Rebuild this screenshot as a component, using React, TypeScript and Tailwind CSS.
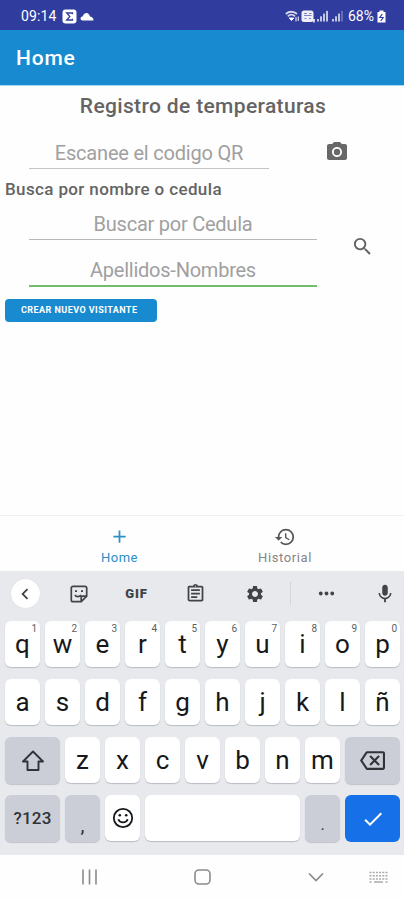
import type { ReactNode } from "react";
import {
  MdAdd,
  MdCheck,
  MdChevronLeft,
  MdHistory,
  MdMic,
  MdMoreHoriz,
  MdOutlineAssignment,
  MdOutlineBackspace,
  MdPhotoCamera,
  MdSearch,
  MdSettings,
} from "react-icons/md";

const topRow = ["q", "w", "e", "r", "t", "y", "u", "i", "o", "p"];
const homeRow = ["a", "s", "d", "f", "g", "h", "j", "k", "l", "ñ"];
const bottomRow = ["z", "x", "c", "v", "b", "n", "m"];

function SignalIcon({ level }: { level: number }) {
  return (
    <svg width="12" height="12" viewBox="0 0 12 12" fill="#fff">
      {[0, 1, 2, 3].map((i) => (
        <rect key={i} x={i * 3} y={9 - i * 2.7} width="2" height={2.5 + i * 2.7} opacity={i < level ? 0.7 : 0.25} />
      ))}
    </svg>
  );
}

function StatusBar() {
  return (
    <div className="flex h-[30px] items-center bg-[#303c9e] pl-[21px] pr-[18px] pt-[2px] text-white">
      <span className="w-[37px] whitespace-nowrap text-[14px] leading-none tracking-[0.1px]">09:14</span>
      <svg className="ml-[4px]" width="15" height="15" viewBox="0 0 15 15">
        <rect x="0.5" y="0.5" width="14" height="14" rx="3" fill="#fff" />
        <path d="M10.5 5.2V4H4.7l3.1 3.5L4.7 11h5.8V9.8" fill="none" stroke="#303c9e" strokeWidth="1.3" />
      </svg>
      <svg className="ml-[3px]" width="14" height="15" viewBox="0 0 14 15">
        <path d="M2.5 11.5A2 2 0 0 1 2.5 7.5Q4 4 6.5 4T10 7.5Q13.5 8.2 13.5 11.5z" fill="#fff" />
      </svg>
      <div className="ml-auto flex items-center">
        <svg width="15" height="13" viewBox="0 0 15 13" fill="none" stroke="#fff" strokeWidth="1.8">
          <path d="M0.8 4C4 1 9 1 12 4M2.8 6.3c2.2-2 5-2 7.2 0" opacity="0.8" />
          <path d="M4.3 8l2.2 2.6L8.7 8z" fill="#fff" strokeWidth="1" />
          <path d="M11 7v4.5M13.3 6.5v4.5" strokeWidth="1.2" opacity="0.8" />
        </svg>
        <svg className="ml-[1px]" width="15" height="13" viewBox="0 0 15 13">
          <rect x="0.5" y="0.5" width="12" height="11.5" rx="2.5" fill="#fff" opacity="0.92" />
          <path d="M3 3.5h3M8 3.5h2.5M3 5.5h7.5M3.5 8.5h2M8 8.5h2" stroke="#303c9e" opacity="0.6" />
          <path d="M13 9v3.5" stroke="#fff" strokeWidth="1.5" />
        </svg>
        <span className="ml-[1px]">
          <SignalIcon level={4} />
        </span>
        <span className="ml-[3px]">
          <SignalIcon level={3} />
        </span>
        <span className="ml-[4px] w-[27px] whitespace-nowrap text-[14px] leading-none">68%</span>
        <svg className="ml-[2px]" width="9" height="13" viewBox="0 0 9 13">
          <path d="M2.5 0.5h4V2H8.5v10.5h-8V2h2z" fill="#fff" />
          <path d="M5.3 4L2.8 7.5h3.4L3.7 11" fill="none" stroke="#303c9e" strokeWidth="1.2" />
        </svg>
      </div>
    </div>
  );
}

function Key({ label, hint }: { label?: ReactNode; hint?: string }) {
  return (
    <div className="relative flex h-[46px] items-center justify-center rounded-[6px] bg-white pb-[1px] text-[26px] leading-none text-[#17181a] shadow-[0_1px_1px_#b9bcc2]">
      {label}
      {hint && <span className="absolute right-[3px] top-[3px] text-[10px] leading-none text-[#5b5e63]">{hint}</span>}
    </div>
  );
}

function DarkKey({ children }: { children: ReactNode }) {
  return (
    <div className="flex h-[47px] items-center justify-center rounded-[6px] bg-[#cbced6] text-[#303338] shadow-[0_1px_1px_#bfc2c9]">
      {children}
    </div>
  );
}

function SmileIcon() {
  return (
    <svg width="22" height="22" viewBox="0 0 22 22" fill="none" stroke="currentColor" strokeWidth="1.8">
      <circle cx="11" cy="11" r="9.2" />
      <path d="M6.3 12.3c1.6 4.2 7.8 4.2 9.4 0" />
      <circle cx="7.8" cy="8.3" r="1.3" fill="currentColor" stroke="none" />
      <circle cx="14.2" cy="8.3" r="1.3" fill="currentColor" stroke="none" />
    </svg>
  );
}

function Toolbar() {
  return (
    <div className="grid h-[43px] grid-cols-[50px_57px_59px_59px_59px_82px_38px] items-center justify-items-center text-[#404347]">
      <div className="flex size-[29px] items-center justify-center rounded-full bg-white shadow-[0_0_1px_#ccc]">
        <MdChevronLeft size={22} />
      </div>
      <svg width="18" height="18" viewBox="0 0 18 18" fill="none" stroke="currentColor" strokeWidth="1.7">
        <path d="M3 1.3h12a1.7 1.7 0 0 1 1.7 1.7v8.2l-5.5 5.5H3A1.7 1.7 0 0 1 1.3 15V3A1.7 1.7 0 0 1 3 1.3z" />
        <path d="M11.2 16.5v-3.8a1.5 1.5 0 0 1 1.5-1.5h3.8M5 9.8c1 2.2 4.2 2.4 6 .2M5 6.2h2M11 6.2h2" />
      </svg>
      <span className="text-[13px] font-black leading-none tracking-[0.9px]">GIF</span>
      <MdOutlineAssignment size={21} />
      <MdSettings size={20} />
      <div className="flex w-full items-center pl-[6px]">
        <div className="h-[23px] w-px bg-[#d3d5d9]" />
        <MdMoreHoriz className="ml-[24px]" size={23} />
      </div>
      <MdMic size={22} />
    </div>
  );
}

function Keyboard() {
  return (
    <div className="h-[284px] bg-[#e7e9ed] pt-px">
      <Toolbar />
      <div className="flex flex-col gap-[12px] pl-[5px] pr-[4px] pt-[6px]">
        <div className="grid grid-cols-10 gap-[5px]">
          {topRow.map((k, i) => (
            <Key key={k} label={k} hint={String((i + 1) % 10)} />
          ))}
        </div>
        <div className="grid grid-cols-10 gap-[5px]">
          {homeRow.map((k) => (
            <Key key={k} label={k} />
          ))}
        </div>
        <div className="grid h-[46px] grid-cols-[55px_repeat(7,1fr)_55px] gap-[5px]">
          <DarkKey>
            <svg width="24" height="24" viewBox="0 0 24 24" fill="none" stroke="currentColor" strokeWidth="1.9">
              <path d="M12 2.500L2 12.5H6.5v8.500h11V12.5h4.500z" strokeLinejoin="round" />
            </svg>
          </DarkKey>
          {bottomRow.map((k) => (
            <Key key={k} label={k} />
          ))}
          <DarkKey>
            <MdOutlineBackspace size={25} />
          </DarkKey>
        </div>
        <div className="grid grid-cols-[55px_35px_35px_1fr_35px_55px] gap-[5px]">
          <DarkKey>
            <span className="text-[17px] font-medium leading-none tracking-[0.2px]">?123</span>
          </DarkKey>
          <DarkKey>
            <span className="pt-[12px] text-[20px] leading-none">,</span>
          </DarkKey>
          <Key label={<SmileIcon />} />
          <Key />
          <DarkKey>
            <span className="pt-[12px] text-[16px] leading-none">.</span>
          </DarkKey>
          <div className="flex h-[47px] items-center justify-center rounded-[6px] bg-[#1670e8] text-white">
            <MdCheck size={24} />
          </div>
        </div>
      </div>
    </div>
  );
}

function NavBar() {
  return (
    <div className="flex h-[45px] items-center bg-[#fefefe] pb-px text-[#8b8b8b]">
      <svg className="ml-[82px]" width="15" height="16" viewBox="0 0 15 16" stroke="currentColor" strokeWidth="1.6">
        <path d="M1 0.5v15M7.5 0.5v15M14 0.5v15" />
      </svg>
      <svg className="ml-[97px]" width="17" height="16" viewBox="0 0 17 16" fill="none" stroke="currentColor" strokeWidth="1.6">
        <rect x="1" y="1" width="15" height="14" rx="4" />
      </svg>
      <svg className="ml-[97px]" width="16" height="10" viewBox="0 0 16 10" fill="none" stroke="currentColor" strokeWidth="1.7">
        <path d="M1 1.5l7 7 7-7" />
      </svg>
      <svg className="ml-[45px]" width="19" height="12" viewBox="0 0 19 12" fill="none" stroke="#aaa" strokeWidth="1.5">
        <path d="M0.5 1.5h18M0.5 4.8h18M0.5 8h18M0.5 11h2M16.5 11h2" strokeDasharray="2 1.2" />
        <path d="M5 11h9" />
      </svg>
    </div>
  );
}

export default function App() {
  return (
    <div className="flex h-[900px] w-[404px] flex-col overflow-hidden bg-[#fefefe] font-['Roboto',sans-serif]">
      <StatusBar />
      <header className="flex h-[56px] items-center border-b border-[#a3d8f7] bg-[#188acf] pl-[16px] pt-[2px]">
        <h1 className="text-[21px] font-medium leading-none tracking-[0.8px] text-white">Home</h1>
      </header>

      <main className="h-[429px]">
        <h2 className="flex h-[40px] items-center justify-center pl-[2px] text-[21px] font-medium leading-none tracking-[0.35px] text-[#646464]">
          Registro de temperaturas
        </h2>
        <div className="flex h-[43px] items-start">
          <div className="ml-[29px] flex h-[43px] w-[240px] items-center justify-center border-b-[1.5px] border-[#c4c4c4] pt-[12px] text-[20px] leading-none tracking-[-0.2px] text-[#a0a0a0]">
            Escanee el codigo QR
          </div>
          <MdPhotoCamera className="ml-[56px] mt-[14px] text-[#686868]" size={24} />
        </div>
        <p className="flex h-[41px] items-center pl-[5px] text-[17px] font-medium leading-none tracking-[0.37px] text-[#646464]">
          Busca por nombre o cedula
        </p>
        <div className="flex h-[77px] items-center">
          <div className="ml-[29px] w-[288px] text-center text-[20px] leading-none tracking-[-0.24px] text-[#a0a0a0]">
            <div className="flex h-[30px] items-center justify-center border-b-[1.5px] border-[#b8b8b8] pb-[2px]">
              Buscar por Cedula
            </div>
            <div className="flex h-[47px] items-center justify-center border-b-2 border-[#70bd70] pt-[15px]">
              Apellidos-Nombres
            </div>
          </div>
          <MdSearch className="mb-[4px] ml-[34px] text-[#626262]" size={23} />
        </div>
        <button className="ml-[5px] mt-[12px] flex h-[23px] w-[152px] items-center rounded-[4px] bg-[#188acf] pl-[16px] text-[9px] font-bold leading-none tracking-[0.45px] text-white">
          CREAR NUEVO VISITANTE
        </button>
      </main>

      <nav className="grid h-[56px] grid-cols-[239px_92px] border-t border-[#efefef] leading-none">
        <div className="flex flex-col items-center pt-[10px] text-[#2b8fc8]">
          <MdAdd size={21} />
          <span className="mt-[4px] text-[13px] tracking-[0.5px]">Home</span>
        </div>
        <div className="flex flex-col items-center pt-[10px] text-[#858585]">
          <MdHistory className="text-[#55585a]" size={22} />
          <span className="mt-[3px] text-[13px] tracking-[0.6px]">Historial</span>
        </div>
      </nav>

      <Keyboard />
      <NavBar />
    </div>
  );
}
